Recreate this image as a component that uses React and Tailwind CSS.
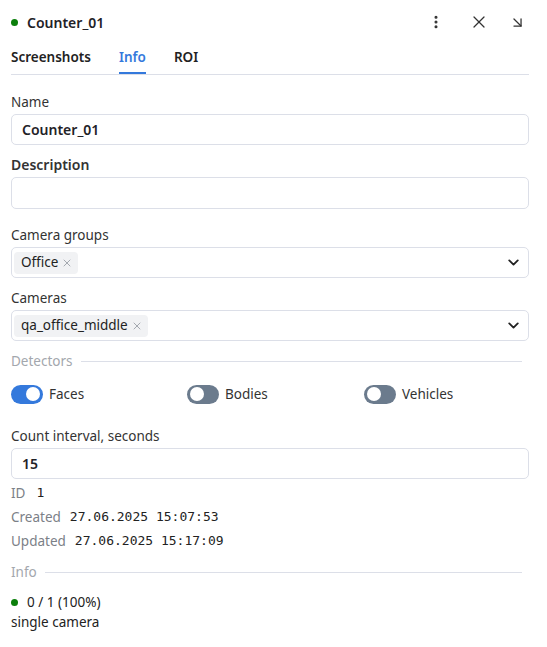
import { useState } from 'react'
import { EllipsisVertical, X, ArrowDownRight, ChevronDown } from 'lucide-react'

const font = { fontFamily: '"Noto Sans", "Open Sans", sans-serif' }

function Chip({ label }) {
  return (
    <span className="flex h-[22px] items-center gap-[3px] rounded-[4px] bg-[#f1f2f4] pl-[7px] pr-[5px] text-[13.5px] text-[#222]">
      {label}
      <X size={12} strokeWidth={1.5} className="text-[#8a8f98]" />
    </span>
  )
}

function MultiSelect({ value }) {
  return (
    <div className="mt-[2px] flex h-[31px] items-center rounded-[5px] border border-[#dcdfe8] pl-[2px] pr-[6px]">
      <div className="flex-1">
        <div className="flex">
          <Chip label={value} />
        </div>
      </div>
      <ChevronDown size={17} strokeWidth={2.6} className="text-[#222]" />
    </div>
  )
}

function Toggle({ on, label, onClick }) {
  return (
    <button onClick={onClick} className="flex items-center gap-[6px] cursor-pointer">
      <span className={`flex h-[19px] w-[32px] items-center rounded-full px-[3px] ${on ? 'justify-end bg-[#3479dc]' : 'justify-start bg-[#6b7b8d]'}`}>
        <span className="h-[14px] w-[14px] rounded-full bg-white" />
      </span>
      <span className="text-[13.5px] text-[#333]">{label}</span>
    </button>
  )
}

function Section({ title, className = '' }) {
  return (
    <div className={`flex items-center gap-[8px] pr-[7px] ${className}`}>
      <span className="text-[13.5px] leading-[20px] text-[#a3a7ad]">{title}</span>
      <div className="h-px flex-1 bg-[#dcdfe8]" />
    </div>
  )
}

export default function App() {
  const [tab, setTab] = useState('Info')
  const [det, setDet] = useState({ Faces: true, Bodies: false, Vehicles: false })
  const mono = { fontFamily: '"DejaVu Sans Mono", "Liberation Mono", monospace' }

  return (
    <div style={font} className="w-[547px] bg-white pl-[11px] pr-[18px] text-[#333]">
      <div className="flex h-[44px] items-center">
        <span className="h-[7px] w-[7px] rounded-full bg-[#0b7f0b]" />
        <h1 className="ml-[9px] flex-1 text-[14px] font-semibold text-[#1f2227]">Counter_01</h1>
        <button className="mr-[25px] cursor-pointer text-[#333]">
          <EllipsisVertical size={16} strokeWidth={2.6} />
        </button>
        <button className="mr-[20px] cursor-pointer text-[#333]">
          <X size={20} strokeWidth={1.5} />
        </button>
        <button className="mr-[3px] cursor-pointer text-[#333]">
          <ArrowDownRight size={17} strokeWidth={1.8} />
        </button>
      </div>

      <div className="flex gap-[28px] border-b border-[#dcdfe8]">
        {['Screenshots', 'Info', 'ROI'].map(t => (
          <button
            key={t}
            onClick={() => setTab(t)}
            className={`cursor-pointer border-b-2 pt-[3px] pb-[5px] text-[13.5px] font-semibold leading-[20px] ${tab === t ? 'border-[#3479dc] text-[#3479dc]' : 'border-transparent text-[#222]'}`}
          >
            {t}
          </button>
        ))}
      </div>

      <div className="pt-[17px] pb-[15px]">
        <label className="block text-[13.5px] leading-[20px]">Name</label>
        <div className="mt-[2px] flex h-[31px] items-center rounded-[5px] border border-[#dcdfe8] px-[10px] text-[14px] font-semibold text-[#1f2227]">
          Counter_01
        </div>

        <label className="mt-[10px] block text-[14px] font-semibold leading-[20px]">Description</label>
        <div className="mt-[2px] h-[32px] rounded-[5px] border border-[#dcdfe8]" />

        <label className="mt-[16px] block text-[13.5px] leading-[20px]">Camera groups</label>
        <MultiSelect value="Office" />

        <label className="mt-[10px] block text-[13.5px] leading-[20px]">Cameras</label>
        <MultiSelect value="qa_office_middle" />

        <Section title="Detectors" className="mt-[10px]" />

        <div className="mt-[13px] grid grid-cols-[176px_177px_1fr]">
          {Object.keys(det).map(k => (
            <div key={k}>
              <Toggle on={det[k]} label={k} onClick={() => setDet({ ...det, [k]: !det[k] })} />
            </div>
          ))}
        </div>

        <label className="mt-[22px] block text-[13.5px] leading-[20px]">Count interval, seconds</label>
        <div className="mt-[2px] flex h-[31px] items-center rounded-[5px] border border-[#dcdfe8] px-[10px] text-[14px] font-semibold text-[#1f2227]">
          15
        </div>

        <div className="mt-[2px] text-[13.5px] leading-[24px]">
          <div className="flex gap-[11px]">
            <span className="text-[#7b8087]">ID</span>
            <span style={mono} className="text-[13px] text-[#222]">1</span>
          </div>
          <div className="flex gap-[9px]">
            <span className="text-[#7b8087]">Created</span>
            <span style={mono} className="text-[13px] text-[#222]">27.06.2025 15:07:53</span>
          </div>
          <div className="flex gap-[9px]">
            <span className="text-[#7b8087]">Updated</span>
            <span style={mono} className="text-[13px] text-[#222]">27.06.2025 15:17:09</span>
          </div>
        </div>

        <Section title="Info" className="mt-[9px]" />

        <div className="mt-[10px] flex items-center gap-[9px] text-[13.5px] leading-[20px] text-[#222]">
          <span className="h-[7px] w-[7px] rounded-full bg-[#0b7f0b]" />
          0 / 1 (100%)
        </div>
        <div className="text-[13.5px] leading-[20px] text-[#222]">single camera</div>
      </div>
    </div>
  )
}
